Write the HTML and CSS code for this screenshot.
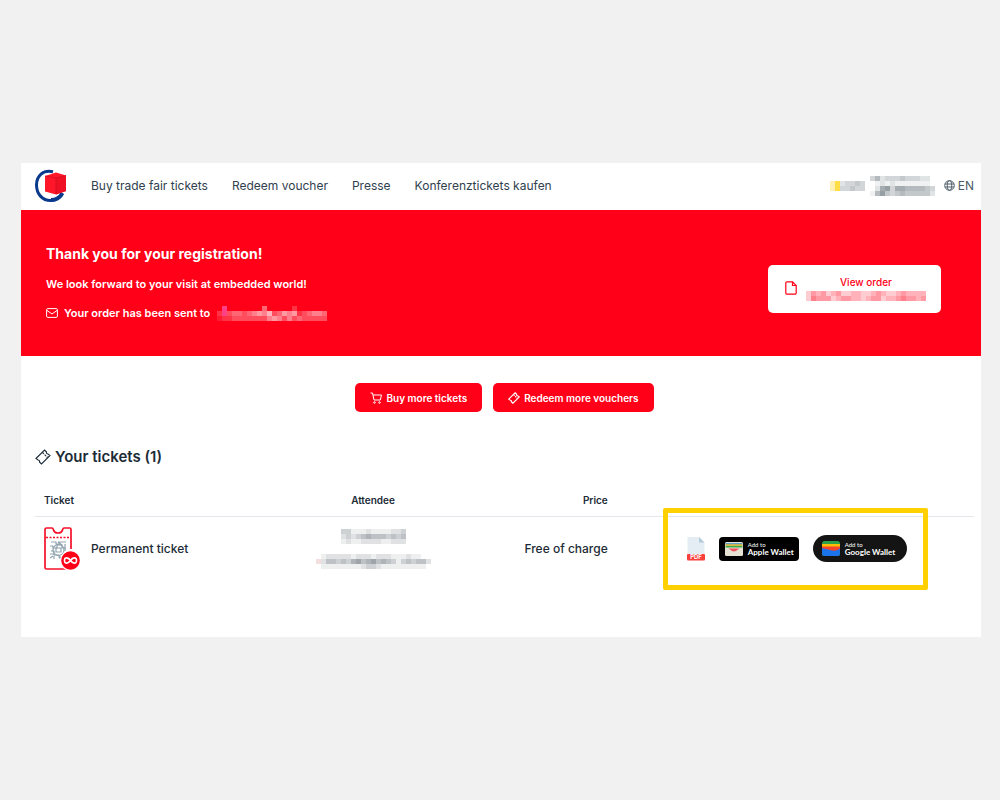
FILE: index.html
```html
<!DOCTYPE html>
<html lang="en">
<head>
    <meta charset="UTF-8">
    <meta name="viewport" content="width=device-width, initial-scale=1.0">
    <title>Ticket Shop - Order Confirmation</title>
    <link rel="stylesheet" href="styles.css">
</head>
<body>
    <div class="panel">
        <!-- Top navigation -->
        <header class="topbar">
            <a href="#" class="logo" aria-label="Home">
                <svg width="34" height="34" viewBox="0 0 34 34">
                    <path d="M19 2.800C9 .5 2.500 7 2.500 16c0 9 6 15.500 14 15.500 5 0 9-2 11.500-6" fill="none" stroke="#0b3a8c" stroke-width="3"/>
                    <path d="M17 31c5 0 9-2.500 11.500-7" fill="none" stroke="#0b3a8c" stroke-width="3.800"/>
                    <path d="M11 7l11-3.500 10 3v15.500l-10 3.500-11-3z" fill="#ff1628"/>
                    <path d="M22 9l10-2.500v15.500l-10 3.500z" fill="#f01024"/>
                    <path d="M11 7l11 2 10-2.500M22 9v16" fill="none" stroke="#c90f24" stroke-width=".7"/>
                </svg>
            </a>
            <nav class="nav">
                <a href="#">Buy trade fair tickets</a>
                <a href="#">Redeem voucher</a>
                <a href="#">Presse</a>
                <a href="#">Konferenztickets kaufen</a>
            </nav>
            <svg class="mosaic account" data-rows="000000003523334333220|yY2334300121211111110|yY3343300267366555543|000000001574345444442"></svg>
            <a href="#" class="lang">
                <svg width="11" height="11" viewBox="0 0 11 11" fill="none" stroke="currentColor">
                    <circle cx="5.500" cy="5.500" r="4.800"/>
                    <ellipse cx="5.500" cy="5.500" rx="2.200" ry="4.800"/>
                    <path d="M1 4h9M1 7h9"/>
                </svg>
                EN
            </a>
        </header>

        <!-- Confirmation banner -->
        <section class="banner">
            <div class="banner-text">
                <h1>Thank you for your registration!</h1>
                <p>We look forward to your visit at embedded world!</p>
                <p class="sent">
                    <svg class="mail" width="12" height="10" viewBox="0 0 12 10" fill="none" stroke="currentColor">
                        <rect x=".6" y=".6" width="10.800" height="8.800" rx="1.200"/>
                        <path d="M1 2.500l5 3.500 5-3.500"/>
                    </svg>
                    <span>Your order has been sent to</span>
                    <svg class="mosaic" data-rows="00p00000004000002000000|02p34434565734656234554|01223333333565353433333"></svg>
                </p>
            </div>
            <button type="button" class="view-order">
                <svg width="12" height="14" viewBox="0 0 12 14" fill="none" stroke="currentColor" stroke-width="1.200">
                    <path d="M7.500.8H2A1.200 1.200 0 0 0 .8 2v10A1.200 1.200 0 0 0 2 13.200h8a1.200 1.200 0 0 0 1.200-1.200V4.500z"/>
                    <path d="M7.500.8v3.700h3.700"/>
                </svg>
                <span class="view-label">
                    View order
                    <svg class="mosaic" data-rows="243423422332234322343333|254442344332344233454434"></svg>
                </span>
            </button>
        </section>

        <div class="actions">
            <button type="button" class="btn">
                <svg width="12" height="12" viewBox="0 0 12 12" fill="none" stroke="currentColor">
                    <path d="M.5 1h2l1.500 7h6.300l1.200-5H3"/>
                    <circle cx="4.500" cy="10.500" r=".8"/>
                    <circle cx="9.500" cy="10.500" r=".8"/>
                </svg>
                Buy more tickets
            </button>
            <button type="button" class="btn">
                <svg width="12" height="12" viewBox="0 0 16 16" fill="none" stroke="currentColor" stroke-width="1.500">
                    <path d="M1 9.500L9.500 1l2 2a1.500 1.500 0 0 0 1.500 2l2 1.500L6.500 15l-2-2A1.500 1.500 0 0 0 3 11z"/>
                    <path d="M7.500 3.500l5 5" stroke-dasharray="2 1"/>
                </svg>
                Redeem more vouchers
            </button>
        </div>

        <!-- Ticket list -->
        <section class="tickets">
            <h2>
                <svg width="16" height="16" viewBox="0 0 16 16" fill="none" stroke="currentColor" stroke-width="1.100">
                    <path d="M1 9.500L9.500 1l2 2a1.500 1.500 0 0 0 1.500 2l2 1.500L6.500 15l-2-2A1.500 1.500 0 0 0 3 11z"/>
                    <path d="M7.500 3.500l5 5" stroke-dasharray="2 1"/>
                </svg>
                Your tickets (1)
            </h2>
            <table>
                <thead>
                    <tr>
                        <th class="col-ticket">Ticket</th>
                        <th class="col-attendee">Attendee</th>
                        <th class="col-price">Price</th>
                        <th class="col-files"></th>
                    </tr>
                </thead>
                <tbody>
                    <tr>
                        <td class="col-ticket">
                            <div class="ticket-name">
                                <svg width="37" height="44" viewBox="0 0 37 44">
                                    <path d="M22 42H2.500A1.500 1.500 0 0 1 1 40.500V2.500A1.500 1.500 0 0 1 2.500 1H8c1 0 1 .5 1.500 2 1 4 8 4 9 0C19 1.500 19 1 20 1h5.500A1.500 1.500 0 0 1 27 2.500V22" fill="none" stroke="#f5102a" stroke-width="1.700"/>
                                    <path d="M2 10.500h24" stroke="#f5102a" stroke-width="1.700" stroke-dasharray="2 1.500"/>
                                    <g fill="none" stroke="#8fa3ae" stroke-width="1.200">
                                        <path d="M7 15h5v2h3v-2h7M6 19h3v2h4v-3h5v3h4M7 24h3v4h5v2h4M21 17v7M6 31l3-2M10 32v-3M6 27h4M14 15l4 3M15 31h3"/>
                                        <circle cx="14.500" cy="23" r="5.500"/>
                                        <path d="M12 21h5v4h-5z"/>
                                    </g>
                                    <circle cx="26.500" cy="33.500" r="10.500" fill="#fff"/>
                                    <circle cx="26.500" cy="33.500" r="9.300" fill="#ff0018"/>
                                    <path d="M26.500 33.500c-2-3-6-4-6 0s4 3 6 0 6-4 6 0-4 3-6 0z" fill="none" stroke="#fff" stroke-width="1.600"/>
                                </svg>
                                Permanent ticket
                            </div>
                        </td>
                        <td class="col-attendee">
                            <svg class="mosaic" data-rows="3311121111223|2323454443434|1211222211222"></svg>
                            <svg class="mosaic" data-rows="01222221222122211121100|r2443435645645431343442|01111111123321111111110"></svg>
                        </td>
                        <td class="col-price">Free of charge</td>
                        <td class="col-files">
                            <div class="files">
                                <a href="#" class="pdf" aria-label="PDF">
                                    <svg width="18" height="24" viewBox="0 0 18 24">
                                        <path d="M1 0h11l5.500 5.500V18H.5V.5z" fill="#e4edf4"/>
                                        <path d="M12 0l5.500 5.500H12z" fill="#b4cad9"/>
                                        <rect y="17" width="18" height="6.500" rx="1" fill="#f8403c"/>
                                        <text x="9" y="22.300" class="pdf-text">PDF</text>
                                    </svg>
                                </a>
                                <button type="button" class="wallet apple">
                                    <svg width="18" height="14" viewBox="0 0 18 14">
                                        <rect width="18" height="14" rx="1.500" fill="#e6e2d5"/>
                                        <path d="M.6 1h16.800v2H.6z" fill="#5a9fc8"/>
                                        <path d="M.6 2.300h16.800v1.500H.6z" fill="#f4b928"/>
                                        <path d="M.6 3.800h16.800v2H.6z" fill="#3fa847"/>
                                        <path d="M.6 5.600h16.800v1H.6z" fill="#e6e2d5"/>
                                        <path d="M3 6.500h12c-2 0-3 3-6 3s-4-3-6-3z" fill="#f1535d"/>
                                    </svg>
                                    <span><small>Add to</small>Apple Wallet</span>
                                </button>
                                <button type="button" class="wallet google">
                                    <svg width="18" height="15" viewBox="0 0 18 15">
                                        <rect width="18" height="15" rx="2.500" fill="#2b9f4a"/>
                                        <path d="M0 3h18v10H0z" fill="#fbbc04"/>
                                        <path d="M0 5.500h18V13H0z" fill="#f4442e"/>
                                        <path d="M0 7l10 2.500c3 .7 5 0 8-2v5a2.500 2.500 0 0 1-2.500 2.500h-13A2.500 2.500 0 0 1 0 12.500z" fill="#1a73e8"/>
                                    </svg>
                                    <span><small>Add to</small>Google Wallet</span>
                                </button>
                                <div class="highlight"></div>
                            </div>
                        </td>
                    </tr>
                </tbody>
            </table>
        </section>
    </div>

    <script src="script.js"></script>
</body>
</html>
```

FILE: styles.css
```css
* {
    margin: 0;
    padding: 0;
    box-sizing: border-box;
}

body {
    background-color: #f1f1f1;
    color: #1c2b36;
    font-family: Inter, "Liberation Sans", sans-serif;
    font-size: 12px;
    padding: 163px 19px 162px 21px;
}

a {
    color: inherit;
    text-decoration: none;
}

button {
    font-family: inherit;
    border: none;
    cursor: pointer;
}

svg {
    display: block;
    flex-shrink: 0;
}

.panel {
    background-color: white;
    padding-bottom: 56px;
}

/* Top navigation */
.topbar {
    display: flex;
    align-items: center;
    height: 47px;
    padding: 0 7px 2px 13px;
}

.nav {
    display: flex;
    gap: 24px;
    margin-left: 23px;
    color: #2f414e;
}

.account {
    margin-left: auto;
    color: #6a767d;
}

.lang {
    display: flex;
    align-items: center;
    gap: 3px;
    margin-left: 9px;
    color: #4d5d68;
}

/* Banner */
.banner {
    display: flex;
    align-items: center;
    justify-content: space-between;
    background-color: #ff0018;
    color: white;
    height: 146px;
    padding: 0 40px 0 25px;
}

.banner-text {
    display: flex;
    flex-direction: column;
    gap: 13px;
    font-size: 11px;
    font-weight: 600;
    line-height: 16px;
}

h1 {
    font-size: 14px;
    font-weight: 700;
    line-height: 18px;
}

.sent {
    display: flex;
    align-items: center;
    gap: 6px;
}

.sent .mosaic {
    margin-left: -4px;
}

.view-order {
    display: flex;
    align-items: center;
    gap: 9px;
    background-color: white;
    color: #ff0018;
    height: 48px;
    margin-top: 12px;
    padding: 0 15px 2px 17px;
    border-radius: 5px;
    font-size: 10px;
    font-weight: 500;
}

.view-label {
    display: flex;
    flex-direction: column;
    align-items: center;
    gap: 3px;
}

/* Buttons */
.actions {
    display: flex;
    justify-content: center;
    gap: 11px;
    padding: 27px 0 26px 7px;
}

.btn {
    display: flex;
    align-items: center;
    gap: 4px;
    background-color: #ff0018;
    color: white;
    height: 29px;
    padding: 0 15px;
    border-radius: 5px;
    font-size: 10px;
    font-weight: 600;
}

/* Tickets */
.tickets {
    padding: 10px 7px 0 14px;
}

h2 {
    display: flex;
    align-items: center;
    gap: 4px;
    font-size: 15px;
    font-weight: 600;
    line-height: 18px;
}

table {
    width: 100%;
    margin-top: 18px;
    border-collapse: collapse;
    table-layout: fixed;
}

th {
    height: 32px;
    border-bottom: 1px solid #e4e7ec;
    font-size: 10px;
    font-weight: 600;
}

td {
    height: 65px;
    font-weight: 500;
}

.col-ticket {
    width: 28%;
    padding-left: 9px;
    text-align: left;
}

.col-attendee {
    width: 16%;
    text-align: center;
}

.col-price {
    width: 17%;
    text-align: right;
}

.ticket-name {
    display: flex;
    align-items: center;
    gap: 10px;
}

td .mosaic {
    margin: 0 auto;
    color: #5d6770;
}

td .mosaic + .mosaic {
    margin-top: 10px;
}

.files {
    display: flex;
    align-items: center;
    gap: 14px;
    position: relative;
    width: 265px;
    height: 64px;
    margin-left: 55px;
    padding-left: 24px;
}

.pdf-text {
    fill: white;
    font-size: 6px;
    font-weight: 700;
    text-anchor: middle;
}

.wallet {
    display: flex;
    align-items: center;
    background-color: black;
    color: white;
    font-family: Lato, sans-serif;
    font-size: 8px;
    font-weight: 700;
    line-height: 8px;
    text-align: left;
    white-space: nowrap;
}

.wallet small {
    display: block;
    font-size: 6px;
    font-weight: 400;
    line-height: 7px;
}

.apple {
    gap: 5px;
    width: 80px;
    height: 24px;
    padding-left: 6px;
    border-radius: 4px;
}

.google {
    gap: 5px;
    width: 94px;
    height: 27px;
    padding-left: 9px;
    border-radius: 14px;
    background-color: #141414;
}

/* Frame around the download options */
.highlight {
    position: absolute;
    inset: -9px 0;
    border: 5px solid #ffd000;
    border-radius: 2px;
    pointer-events: none;
}
```

FILE: script.js
```js
// Masks personal data with a grid of 5px cells.
// Each digit is the strength of a cell, letters are fixed colours.
const CELL = 5;
const colors = { y: '#fff0b8', Y: '#ffdd45', p: '#ff3f86', r: '#f5dede' };

document.querySelectorAll('.mosaic').forEach(svg => {
    const rows = svg.dataset.rows.split('|');
    svg.setAttribute('width', rows[0].length * CELL);
    svg.setAttribute('height', rows.length * CELL);

    rows.forEach((row, y) => {
        [...row].forEach((value, x) => {
            const rect = document.createElementNS('http://www.w3.org/2000/svg', 'rect');
            rect.setAttribute('x', x * CELL);
            rect.setAttribute('y', y * CELL);
            rect.setAttribute('width', CELL);
            rect.setAttribute('height', CELL);
            rect.setAttribute('fill', colors[value] || 'currentColor');
            if (!colors[value]) {
                rect.setAttribute('fill-opacity', value / 10);
            }
            svg.appendChild(rect);
        });
    });
});
```
